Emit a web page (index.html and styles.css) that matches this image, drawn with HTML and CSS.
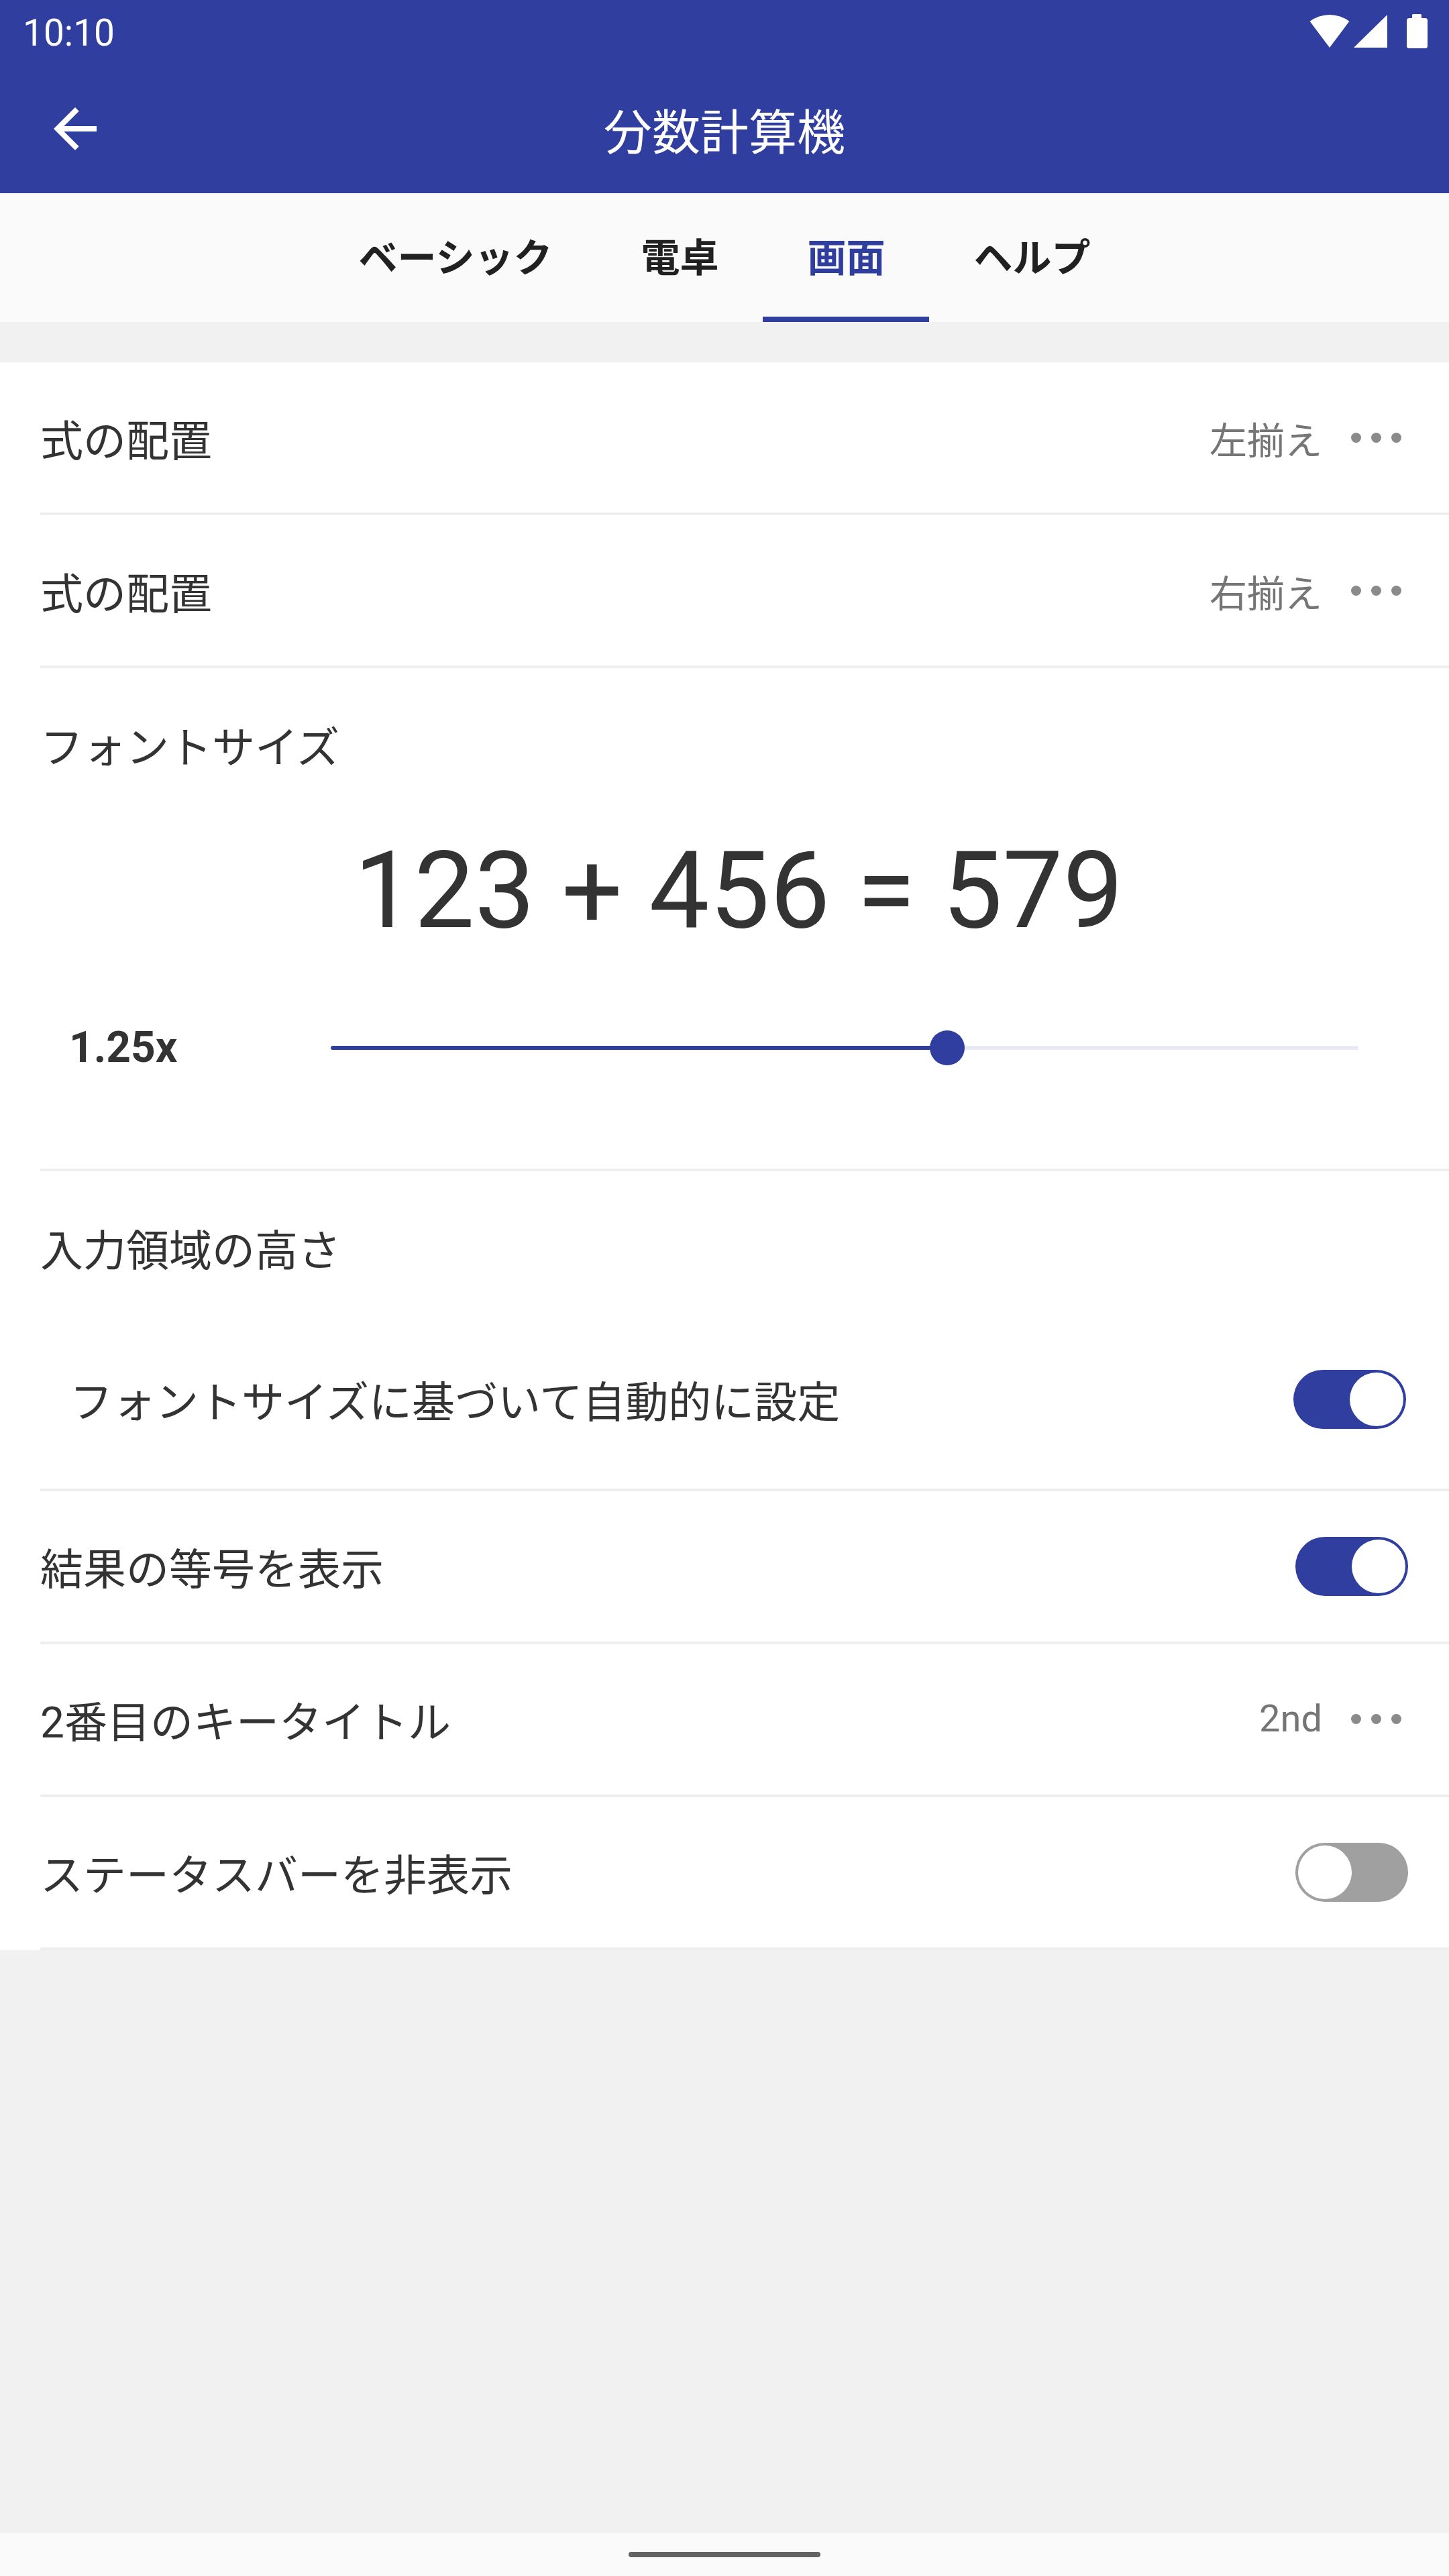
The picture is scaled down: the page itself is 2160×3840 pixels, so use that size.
FILE: index.html
```html
<!DOCTYPE html>
<html lang="ja">
<head>
<meta charset="utf-8">
<title>分数計算機</title>
<link rel="stylesheet" href="styles.css">
</head>
<body>
<div class="screen">
  <header class="appbar">
    <div class="statusbar">
      <span class="time">10:10</span>
      <svg class="sys-icons" width="180" height="56" viewBox="0 0 180 56">
        <path d="M2.6 12.8 A49 49 0 0 1 61.4 12.8 L32 52 Z" fill="#fff"/>
        <path d="M68 52 L118 52 L118 3 Z" fill="#fff"/>
        <rect x="155" y="2" width="14" height="8" rx="1.5" fill="#fff"/>
        <rect x="147" y="8" width="31" height="45" rx="3.5" fill="#fff"/>
      </svg>
    </div>
    <div class="toolbar">
      <div class="nav-icon">
        <svg width="96" height="96" viewBox="0 0 24 24"><path d="M20 11H7.83l5.59-5.59L12 4l-8 8 8 8 1.41-1.41L7.83 13H20v-2z" fill="#fff"/></svg>
      </div>
      <h1 class="title">分数計算機</h1>
      <div></div>
    </div>
  </header>

  <nav class="tabs">
    <div class="tab">ベーシック</div>
    <div class="tab">電卓</div>
    <div class="tab active">画面</div>
    <div class="tab">ヘルプ</div>
  </nav>

  <main class="content">
    <div class="card">
      <div class="row">
        <span class="label">式の配置</span>
        <span class="value cjk">左揃え</span>
        <span class="dots"><i></i><i></i><i></i></span>
      </div>
      <div class="row">
        <span class="label">式の配置</span>
        <span class="value cjk">右揃え</span>
        <span class="dots"><i></i><i></i><i></i></span>
      </div>

      <div class="section font-section">
        <div class="label section-label">フォントサイズ</div>
        <div class="equation">123 + 456 = 579</div>
        <div class="slider-row">
          <span class="slider-value">1.25x</span>
          <div class="slider">
            <div class="slider-fill" style="width:60%"></div>
            <span class="slider-thumb" style="left:60%"></span>
          </div>
        </div>
      </div>

      <div class="section height-section">
        <div class="label section-label">入力領域の高さ</div>
        <div class="sub-row">
          <span class="label">フォントサイズに基づいて自動的に設定</span>
          <span class="switch on"><span class="knob"></span></span>
        </div>
      </div>

      <div class="row toggle-row">
        <span class="label">結果の等号を表示</span>
        <span class="switch on"><span class="knob"></span></span>
      </div>
      <div class="row">
        <span class="label">2番目のキータイトル</span>
        <span class="value">2nd</span>
        <span class="dots"><i></i><i></i><i></i></span>
      </div>
      <div class="row toggle-row">
        <span class="label">ステータスバーを非表示</span>
        <span class="switch off"><span class="knob"></span></span>
      </div>
    </div>
  </main>

  <div class="navbar"><span class="handle"></span></div>
</div>
</body>
</html>
```

FILE: styles.css
```css
* { box-sizing: border-box; }

html, body {
  margin: 0;
  padding: 0;
}

body {
  width: 2160px;
  height: 3840px;
  overflow: hidden;
  background: #f1f1f1;
  font-family: Roboto, "Noto Sans CJK JP", sans-serif;
  color: #333333;
}

.screen {
  width: 2160px;
  height: 3840px;
  display: flex;
  flex-direction: column;
}

/* ---------- App bar ---------- */
.appbar {
  background: #303f9f;
  color: #ffffff;
}

.statusbar {
  height: 96px;
  display: flex;
  align-items: center;
  justify-content: space-between;
  padding: 0 30px 0 34px;
}

.time {
  font-family: Roboto, sans-serif;
  font-size: 55px;
  line-height: 1;
  margin-top: 2px;
}

.sys-icons {
  display: block;
  margin-top: -2px;
}

.toolbar {
  height: 192px;
  display: grid;
  grid-template-columns: 1fr auto 1fr;
  align-items: center;
}

.nav-icon {
  padding-left: 64px;
  display: flex;
  align-items: center;
}

.nav-icon svg { display: block; }

.title {
  margin: 0;
  font-family: "Noto Sans CJK JP", sans-serif;
  font-weight: 400;
  font-size: 72px;
  line-height: 1.2;
  color: #ffffff;
}

/* ---------- Tabs ---------- */
.tabs {
  height: 192px;
  background: #fafafa;
  display: flex;
  justify-content: center;
}

.tab {
  padding: 0 66px;
  display: flex;
  align-items: center;
  font-family: "Noto Sans CJK JP", sans-serif;
  font-weight: 700;
  font-size: 58px;
  color: #212121;
  border-bottom: 8px solid transparent;
}

.tab.active {
  color: #303f9f;
  border-bottom-color: #303f9f;
}

/* ---------- Content ---------- */
.content {
  flex: 1;
  padding-top: 60px;
}

.card {
  background: #ffffff;
}

.label {
  font-size: 64px;
  line-height: 1.2;
  color: #333333;
}

.row {
  margin-left: 60px;
  height: 228px;
  border-bottom: 4px solid #eeeeee;
  display: flex;
  align-items: center;
  padding-right: 71px;
}

.row .label,
.row .value.cjk,
.sub-row .label {
  padding-top: 14px;
}

.row .label { flex: 1; }

.value {
  font-size: 56px;
  line-height: 1.2;
  color: #757575;
}

.dots {
  display: flex;
  gap: 15px;
  margin-left: 43px;
}

.dots i {
  display: block;
  width: 15px;
  height: 15px;
  border-radius: 50%;
  background: #8a8a8a;
}

.toggle-row { padding-right: 61px; }

/* ---------- Sections ---------- */
.section {
  margin-left: 60px;
  border-bottom: 4px solid #eeeeee;
  padding-top: 82px;
}

.font-section { padding-bottom: 140px; }

.equation {
  margin-top: 74px;
  font-family: Roboto, sans-serif;
  font-size: 160px;
  line-height: 198px;
  text-align: center;
  padding-right: 18px;
  color: #333333;
}

.slider-row {
  margin-top: 95px;
  height: 80px;
  display: flex;
  align-items: center;
  padding-left: 43px;
  padding-right: 135px;
}

.slider-value {
  width: 390px;
  font-family: Roboto, sans-serif;
  font-weight: 700;
  font-size: 64px;
  line-height: 1;
  color: #333333;
}

.slider {
  flex: 1;
  height: 6px;
  background: #e8eaf6;
  border-radius: 3px;
  position: relative;
}

.slider-fill {
  height: 100%;
  background: #303f9f;
  border-radius: 3px;
}

.slider-thumb {
  position: absolute;
  top: 50%;
  width: 52px;
  height: 52px;
  margin-left: -26px;
  margin-top: -26px;
  border-radius: 50%;
  background: #303f9f;
}

.height-section { padding-bottom: 45px; }

.sub-row {
  margin-top: 93px;
  height: 176px;
  display: flex;
  align-items: center;
  justify-content: space-between;
  padding-left: 44px;
  padding-right: 64px;
}

/* ---------- Switch ---------- */
.switch {
  width: 168px;
  height: 88px;
  border-radius: 44px;
  padding: 4px;
  display: flex;
  align-items: center;
  flex: none;
}

.switch.on {
  background: #303f9f;
  justify-content: flex-end;
}

.switch.off {
  background: #a0a0a0;
  justify-content: flex-start;
}

.knob {
  width: 80px;
  height: 80px;
  border-radius: 50%;
  background: #ffffff;
}

/* ---------- Nav bar ---------- */
.navbar {
  height: 64px;
  background: #fafafa;
  display: flex;
  align-items: center;
  justify-content: center;
}

.handle {
  width: 286px;
  height: 8px;
  border-radius: 4px;
  background: #626262;
}
```
